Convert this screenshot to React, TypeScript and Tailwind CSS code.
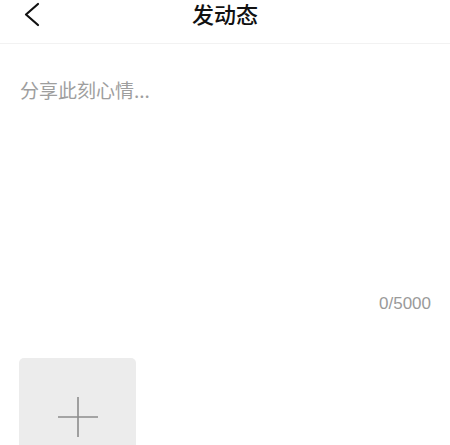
import React from "react";

export default function App() {
  return (
    <div className="w-[450px] h-[445px] overflow-hidden bg-white" style={{ fontFamily: '"Noto Sans CJK SC", "Noto Sans", sans-serif' }}>
      <header className="h-[44px] border-b border-[#f2f2f2] grid grid-cols-[1fr_auto_1fr] items-start">
        <div className="pl-[24px] pt-[2px]">
          <svg width="16" height="25" viewBox="0 0 16 25" fill="none">
            <polyline points="14,2 2,12.5 14,23" stroke="#111" strokeWidth="2.2" strokeLinecap="round" strokeLinejoin="round" />
          </svg>
        </div>
        <h1 className="text-[22px] leading-[26px] font-medium text-[#111]">发动态</h1>
        <div />
      </header>
      <main className="pt-[32px]">
        <div className="px-[20px] h-[216px]">
          <p className="text-[19px] leading-[28px] text-[#9e9e9e]">分享此刻心情...</p>
        </div>
        <div className="flex justify-end pr-[19px]">
          <span className="text-[17px] leading-[24px] text-[#9a9a9a]" style={{ fontFamily: '"Liberation Sans", Arial, sans-serif' }}>0/5000</span>
        </div>
        <div className="mt-[42px] ml-[19px] w-[117px] h-[117px] rounded-[5px] bg-[#ececec] flex items-center justify-center">
          <svg width="40" height="40" viewBox="0 0 40 40">
            <line x1="0" y1="20" x2="40" y2="20" stroke="#8c8c8c" strokeWidth="1.6" />
            <line x1="20" y1="0" x2="20" y2="40" stroke="#8c8c8c" strokeWidth="1.6" />
          </svg>
        </div>
      </main>
    </div>
  );
}
